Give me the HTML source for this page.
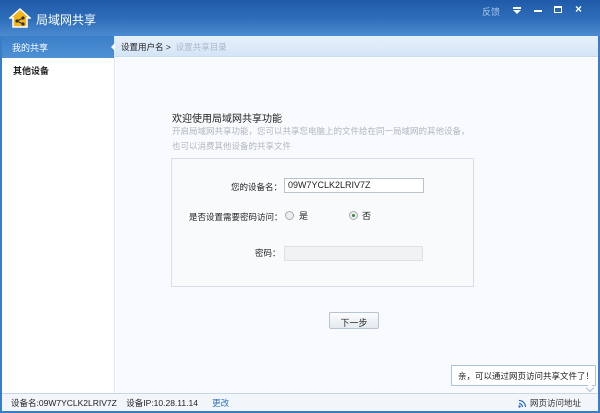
<!DOCTYPE html>
<html><head><meta charset="utf-8"><style>
*{margin:0;padding:0;box-sizing:border-box}
body{width:600px;height:413px;overflow:hidden;font-family:"Liberation Sans","Noto Sans CJK SC",sans-serif;font-size:9px;color:#222;background:#fff;position:relative}
.win{position:absolute;inset:0;border:2px solid #3a7dc4;border-top:none}
.title{position:absolute;left:0;top:0;width:600px;height:36px;background:linear-gradient(180deg,#1f5aa8 0%,#2d6cb8 50%,#4a8bd0 100%)}
.title .t{position:absolute;left:36px;top:11px;color:#fff;font-size:12px}
.side{position:absolute;left:2px;top:36px;width:113px;height:357px;background:#fff;border-right:1px solid #dce6f0}
.sel{height:22px;background:linear-gradient(#3a7fc8,#4f90d4);color:#fff;padding:5px 0 0 10px}
.it{padding:6px 0 0 11px;font-weight:bold}
.bc{position:absolute;left:115px;top:36px;width:483px;height:21px;background:linear-gradient(#e6f0fb,#d4e5f7);border-bottom:1px solid #c9dbef;padding:5px 0 0 6px;font-size:8.5px}
.main{position:absolute;left:116px;top:58px;width:482px;height:335px;background:#f8fafd}
.status{position:absolute;left:2px;top:393px;width:596px;height:18px;background:#f2f6fa;border-top:1px solid #c6d7ea;font-size:8.5px;padding:3px 0 0 9px}
</style></head><body>
<div class="win"></div>
<div class="title">
<svg style="position:absolute;left:9px;top:7px" width="22" height="22" viewBox="0 0 22 22"><path d="M11 2 L21 11 L18 11 L18 20 L4 20 L4 11 L1 11Z" fill="#f2b51a" stroke="#fff" stroke-width="1.5"/><circle cx="8" cy="14" r="1.6" fill="#333"/><circle cx="14" cy="11" r="1.6" fill="#333"/><circle cx="14" cy="17" r="1.6" fill="#333"/><path d="M8 14L14 11M8 14L14 17" stroke="#333"/></svg>
<div class="t">局域网共享</div>
<div style="position:absolute;left:482px;top:5px;color:#aac6e6;font-size:9px">反馈</div>
<div style="position:absolute;left:513px;top:7px;width:8px;height:2px;background:#fff"></div>
<div style="position:absolute;left:513px;top:10px;width:0;height:0;border-left:4px solid transparent;border-right:4px solid transparent;border-top:4px solid #fff"></div>
<div style="position:absolute;left:534px;top:10px;width:8px;height:2px;background:#fff"></div>
<div style="position:absolute;left:554px;top:6px;width:8px;height:7px;border:1.5px solid #fff;border-top-width:2.5px"></div>
<div style="position:absolute;left:575px;top:2px;color:#fff;font-size:12px;font-weight:bold">×</div>
</div>
<div class="side"><div class="sel">我的共享</div><div class="it">其他设备</div></div>
<div style="position:absolute;left:111px;top:42px;width:0;height:0;border-top:5px solid transparent;border-bottom:5px solid transparent;border-right:5px solid #fff"></div>
<div class="bc"><b style="font-weight:normal;color:#222">设置用户名</b> &gt; &nbsp;<span style="color:#aab8c8">设置共享目录</span></div>
<div class="main">
<div style="position:absolute;left:56px;top:52px;font-size:10px;color:#222">欢迎使用局域网共享功能</div>
<div style="position:absolute;left:56px;top:66px;color:#b0b8c0;font-size:8.5px;line-height:15px">开启局域网共享功能，您可以共享您电脑上的文件给在同一局域网的其他设备，<br>也可以消费其他设备的共享文件</div>
<div style="position:absolute;left:55px;top:100px;width:303px;height:129px;border:1px solid #d8dfe6;background:#f8fafc"></div>
<div style="position:absolute;left:115px;top:123px;font-size:8.5px">您的设备名：</div>
<div style="position:absolute;left:168px;top:120px;width:140px;height:15px;border:1px solid #b9c3cc;background:#fff;padding:1px 0 0 3px;font-size:9px">09W7YCLK2LRIV7Z</div>
<div style="position:absolute;left:73px;top:153px;font-size:8.5px">是否设置需要密码访问：</div>
<div style="position:absolute;left:169px;top:153px;width:9px;height:9px;border:1px solid #aab;border-radius:50%;background:#eee"></div>
<div style="position:absolute;left:183px;top:151px">是</div>
<div style="position:absolute;left:233px;top:153px;width:9px;height:9px;border:1px solid #aab;border-radius:50%;background:#eee"><div style="margin:2px;width:3px;height:3px;border-radius:50%;background:#3a8a3a"></div></div>
<div style="position:absolute;left:246px;top:151px">否</div>
<div style="position:absolute;left:139px;top:189px;font-size:8.5px">密码：</div>
<div style="position:absolute;left:168px;top:188px;width:139px;height:15px;border:1px solid #dde2e6;background:#f0f2f4"></div>
<div style="position:absolute;left:213px;top:254px;width:50px;height:17px;border:1px solid #b8c4d0;border-radius:2px;background:linear-gradient(#fbfcfd,#e4eaf0);text-align:center;padding-top:3px">下一步</div>
<div style="position:absolute;left:335px;top:307px;width:145px;height:21px;border:1px solid #a8c4e0;background:#fff;padding:4px 0 0 6px;font-size:8.5px">亲，可以通过网页访问共享文件了！</div>
<div style="position:absolute;left:471px;top:327px;width:6px;height:6px;background:#fff;border-right:1px solid #a8c4e0;border-bottom:1px solid #a8c4e0;transform:rotate(45deg)"></div>
</div>
<div class="status">设备名:09W7YCLK2LRIV7Z &nbsp;&nbsp; 设备IP:10.28.11.14 &nbsp;&nbsp;&nbsp;&nbsp; <span style="color:#2d6fc0">更改</span>
<svg style="position:absolute;left:516px;top:5px" width="9" height="9" viewBox="0 0 9 9"><circle cx="1.5" cy="7.5" r="1.2" fill="#2d6fc0"/><path d="M1 4.5A3.5 3.5 0 0 1 4.5 8M1 1.5A6.5 6.5 0 0 1 7.5 8" fill="none" stroke="#2d6fc0" stroke-width="1.2"/></svg>
<span style="position:absolute;left:528px;top:3px;color:#333">网页访问地址</span></div>
</body></html>
